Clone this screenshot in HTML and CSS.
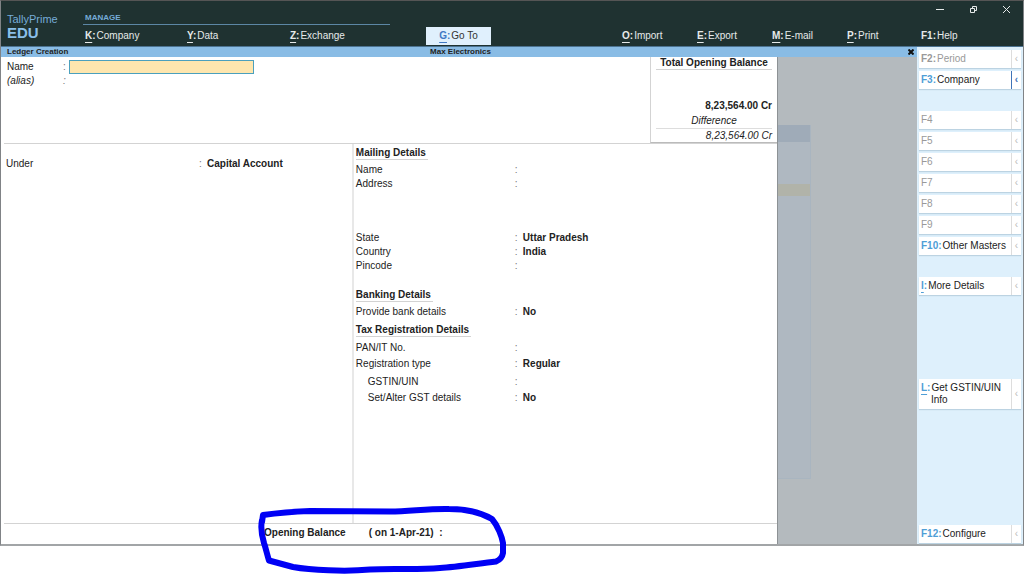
FILE: index.html
```html
<!DOCTYPE html>
<html lang="en">

<head>
  <meta charset="UTF-8">
  <meta name="viewport" content="width=device-width, initial-scale=1.0">
  <title>TallyPrime - Ledger Creation</title>
  <link rel="stylesheet" href="styles.css">
</head>

<body>
  <div class="app">
    <header class="top">
      <div class="brand">
        <span>TallyPrime</span>
        <strong>EDU</strong>
      </div>
      <div class="manage">MANAGE</div>
      <div class="win">
        <button type="button" aria-label="Minimize">
          <svg width="9" height="9" viewBox="0 0 9 9"><path d="M0 4.5h8" /></svg>
        </button>
        <button type="button" aria-label="Restore">
          <svg width="9" height="9" viewBox="0 0 9 9"><path d="M1.500 3.500h4v4h-4zM3.500 3V1.500h4v4H6" /></svg>
        </button>
        <button type="button" aria-label="Close">
          <svg width="9" height="9" viewBox="0 0 9 9"><path d="M1 1l7 7M8 1L1 8" /></svg>
        </button>
      </div>
      <nav class="menu">
        <a href="#"><b><u>K</u>:</b>Company</a>
        <a href="#"><b><u>Y</u>:</b>Data</a>
        <a href="#"><b><u>Z</u>:</b>Exchange</a>
        <button type="button" class="goto"><b><u>G</u>:</b>Go To</button>
        <a href="#"><b><u>O</u>:</b>Import</a>
        <a href="#"><b><u>E</u>:</b>Export</a>
        <a href="#"><b><u>M</u>:</b>E-mail</a>
        <a href="#"><b><u>P</u>:</b>Print</a>
        <a href="#"><b>F1:</b>Help</a>
      </nav>
    </header>

    <div class="body">
      <main class="work">
        <div class="title">
          <span>Ledger Creation</span>
          <span>Max Electronics</span>
          <button type="button" aria-label="Close form">
            <svg width="6" height="6" viewBox="0 0 6 6"><path d="M.5.5l5 5M5.500.5l-5 5" /></svg>
          </button>
        </div>

        <div class="panes">
          <form class="ledger">
            <div class="head">
              <div class="names">
                <div class="line"><label for="name">Name</label><span class="colon">:</span><input id="name" type="text"></div>
                <div class="line alias"><span>(alias)</span><span class="colon">:</span></div>
              </div>
              <div class="total">
                <h2>Total Opening Balance</h2>
                <p class="amount">8,23,564.00 Cr</p>
                <p class="diff">Difference</p>
                <p class="diff-amount">8,23,564.00 Cr</p>
              </div>
            </div>

            <div class="details">
              <dl class="under">
                <div class="row"><dt>Under</dt><dd>Capital Account</dd></div>
              </dl>
              <div class="info">
                <h3>Mailing Details</h3>
                <dl>
                  <div class="row"><dt>Name</dt><dd></dd></div>
                  <div class="row address"><dt>Address</dt><dd></dd></div>
                  <div class="row"><dt>State</dt><dd>Uttar Pradesh</dd></div>
                  <div class="row"><dt>Country</dt><dd>India</dd></div>
                  <div class="row"><dt>Pincode</dt><dd></dd></div>
                </dl>
                <h3 class="banking">Banking Details</h3>
                <dl>
                  <div class="row"><dt>Provide bank details</dt><dd>No</dd></div>
                </dl>
                <h3>Tax Registration Details</h3>
                <dl class="tax">
                  <div class="row"><dt>PAN/IT No.</dt><dd></dd></div>
                  <div class="row"><dt>Registration type</dt><dd>Regular</dd></div>
                  <div class="row sub gstin"><dt>GSTIN/UIN</dt><dd></dd></div>
                  <div class="row sub"><dt>Set/Alter GST details</dt><dd>No</dd></div>
                </dl>
              </div>
            </div>

            <div class="opening">
              <span>Opening Balance</span>
              <span>( on 1-Apr-21)&nbsp; :</span>
              <svg class="mark" width="256" height="70" viewBox="256 504 256 70">
                <path d="M262 522L263 515Q285 512 310 511L390 511.500C412 511 430 508.500 449 509C469 509 482 513 492 519C498 526 502 537 503 543L503 553Q502 559 496 561.500C475 564 456 567 440 568C415 570 390 568 370 569.500C345 572 310 570 293 567L269 560.500C267 554 266 549 264 543Q260 530 262 520" />
              </svg>
            </div>
          </form>

          <div class="backdrop">
            <div class="ghost">
              <div class="ghost-title"></div>
              <div class="ghost-row"></div>
            </div>
          </div>
        </div>
      </main>

      <aside class="side">
        <button type="button" disabled><span><b>F2:</b>Period</span><i>‹</i></button>
        <button type="button" class="on"><span><b>F3:</b>Company</span><i>‹</i></button>
        <button type="button" class="group" disabled><span>F4</span><i>‹</i></button>
        <button type="button" disabled><span>F5</span><i>‹</i></button>
        <button type="button" disabled><span>F6</span><i>‹</i></button>
        <button type="button" disabled><span>F7</span><i>‹</i></button>
        <button type="button" disabled><span>F8</span><i>‹</i></button>
        <button type="button" disabled><span>F9</span><i>‹</i></button>
        <button type="button"><span><b>F10:</b>Other Masters</span><i>‹</i></button>
        <button type="button" class="group"><span><b><u>I</u>:</b>More Details</span><i>‹</i></button>
        <button type="button" class="tall"><span><b><u>L</u>:</b>Get GSTIN/UIN Info</span><i>‹</i></button>
        <button type="button" class="last"><span><b>F12:</b>Configure</span><i>‹</i></button>
      </aside>
    </div>
  </div>
</body>

</html>
```
FILE: styles.css
```css
* {
  box-sizing: border-box;
  margin: 0;
  padding: 0;
}

body {
  min-height: 100vh;
  font: 10px/14px "Liberation Sans", Arial, sans-serif;
  color: #222222;
  background: #ffffff;
}

button {
  font: inherit;
  border: 0;
  background: none;
}

a {
  color: inherit;
  text-decoration: none;
}

svg {
  display: block;
  fill: none;
}

.app {
  display: flex;
  flex-direction: column;
  min-height: calc(100vh - 28px);
  border: 1px solid #808386;
  border-top-color: #555555;
  border-bottom: 2px solid #a2a5a7;
}

/* top bar */
.top {
  display: grid;
  grid-template-columns: 82px 343fr 598fr;
  grid-template-rows: 11px 13px 21px;
  background: #1f3231;
  border-bottom: 1px solid #4c7391;
  color: #e6eaea;
}

.brand {
  grid-row: 1 / 4;
  padding: 11px 0 0 6px;
  font-size: 11px;
  color: #76acd8;
}

.brand span,
.brand strong {
  display: block;
}

.brand strong {
  font-size: 15px;
  color: #8abfe9;
}

.manage {
  grid-area: 2 / 2;
  margin-right: 36px;
  padding-left: 2px;
  font-size: 8px;
  line-height: 11px;
  font-weight: bold;
  color: #76acd8;
  border-bottom: 1px solid #5c87a5;
}

.win {
  grid-area: 1 / 3 / 3 / 4;
  display: flex;
  justify-content: flex-end;
  align-items: flex-start;
  gap: 24px;
  padding: 4px 12px 0 0;
}

.win svg {
  stroke: #e6eaea;
}

.menu {
  grid-area: 3 / 2 / 4 / 4;
  display: grid;
  grid-template-columns: 102fr 103fr 138fr 194fr 75fr 75fr 75fr 74fr 104fr;
}

.menu a {
  padding: 4px 0 0 2px;
}

b {
  margin-right: 1px;
}

u {
  text-underline-offset: 3px;
}

.menu .goto {
  justify-self: start;
  align-self: start;
  margin-top: 2px;
  width: 65px;
  height: 18px;
  background: #e0f0fd;
  color: #333333;
}

.goto b {
  color: #4079c4;
}

/* form area */
.body {
  flex: 1;
  display: flex;
}

.work {
  flex: 1;
  display: flex;
  flex-direction: column;
}

.title {
  display: grid;
  grid-template-columns: 1fr auto 1fr;
  align-items: center;
  padding: 0 3px 0 6px;
  font-size: 8px;
  line-height: 10px;
  font-weight: bold;
  background: #89bce5;
}

.title button {
  justify-self: end;
}

.title svg {
  stroke: #111111;
  stroke-width: 2;
}

.panes {
  flex: 1;
  display: flex;
}

.ledger {
  flex: 1;
  display: flex;
  flex-direction: column;
  padding-left: 3px;
  border-right: 1px solid #8d9295;
}

.head {
  display: flex;
  justify-content: space-between;
  border-bottom: 1px solid #d3d3d3;
}

.names {
  padding: 3px 0 0 3px;
}

.line {
  display: grid;
  grid-template-columns: 56px 6px 185px;
  align-items: center;
}

.line input {
  height: 14px;
  padding: 0 3px;
  font: inherit;
  border: 1px solid #4ba0bd;
  outline: 0;
  background: #fee6ae;
}

.colon,
.row dd::before {
  color: #777777;
}

.alias {
  font-style: italic;
}

.total {
  width: 127px;
  padding: 0 5px;
  text-align: right;
  border-left: 1px solid #d3d3d3;
  border-bottom: 1px solid #bbbbbb;
}

.total h2 {
  font-size: 10px;
  line-height: 12px;
  text-align: center;
  border-bottom: 1px solid #d3d3d3;
}

.amount {
  padding-top: 29px;
  font-weight: bold;
}

.diff {
  padding-top: 1px;
  text-align: center;
  font-style: italic;
  border-bottom: 1px solid #dddddd;
}

.diff-amount {
  padding-top: 1px;
  font-style: italic;
  line-height: 12px;
}

.details {
  flex: 1;
  display: flex;
}

.under {
  flex: 0 0 45%;
  padding: 13px 0 0 2px;
}

.info {
  flex: 1;
  padding: 3px 0 0 2px;
  border-left: 2px solid #e8e8e8;
}

.info h3 {
  width: fit-content;
  padding-right: 2px;
  font-size: 10px;
  line-height: 12px;
  border-bottom: 1px solid #d3d3d3;
}

.info dl {
  padding: 3px 0 5px;
}

.row {
  display: grid;
  grid-template-columns: 159px 1fr;
}

.under .row {
  grid-template-columns: 193px 1fr;
}

.row dd {
  font-weight: bold;
}

.row dd::before {
  content: ":";
  display: inline-block;
  width: 8px;
  font-weight: normal;
}

.address {
  margin-bottom: 40px;
}

.info .banking {
  margin-top: 11px;
}

.info .tax {
  display: grid;
  gap: 2px;
  padding-top: 4px;
}

.sub dt {
  padding-left: 12px;
}

.gstin {
  margin-top: 2px;
}

.opening {
  position: relative;
  display: flex;
  gap: 23px;
  padding: 2px 0 4px 260px;
  font-weight: bold;
  border-top: 1px solid #d3d3d3;
}

/* hand drawn circle round the opening balance */
.mark {
  position: absolute;
  left: 252px;
  top: -20px;
  stroke: #0000f5;
  stroke-width: 6;
  stroke-linecap: round;
  stroke-linejoin: round;
}

/* dimmed screen behind the form */
.backdrop {
  display: flex;
  width: 139px;
  padding: 68px 0 65px;
  background: #b4babe;
}

.ghost {
  width: 33px;
  background: #afb8c1;
  border-right: 1px solid #a9b5c0;
  border-bottom: 1px solid #a9b5c0;
}

.ghost-title {
  height: 17px;
  background: #9fabb8;
}

.ghost-row {
  height: 12px;
  margin-top: 42px;
  background: #b1b3a9;
}

/* right button bar */
.side {
  display: flex;
  flex-direction: column;
  gap: 3px;
  width: 106px;
  padding: 3px 2px 1px;
  background: #def0fc;
}

.side button {
  display: flex;
  min-height: 18px;
  text-align: left;
  line-height: 12px;
  color: #222222;
  background: #ffffff;
  box-shadow: 0 1px 1px #bcd3e2;
}

.side button:disabled {
  color: #999999;
}

.side span {
  flex: 1;
  padding: 3px 0 3px 2px;
}

.side b {
  color: #4f9ed6;
}

.side button:disabled b {
  color: #999999;
}

.side i {
  display: flex;
  align-items: center;
  justify-content: center;
  width: 10px;
  font-style: normal;
  color: #bbbbbb;
  border-left: 1px solid #dddddd;
}

.side .on i {
  color: #3f74b8;
  font-weight: bold;
  border-color: #3f74b8;
}

.side .group {
  margin-top: 19px;
}

.side .tall {
  margin-top: 81px;
}

.side .tall span {
  padding-left: 12px;
  text-indent: -10px;
}

.side .last {
  margin-top: auto;
}
```
